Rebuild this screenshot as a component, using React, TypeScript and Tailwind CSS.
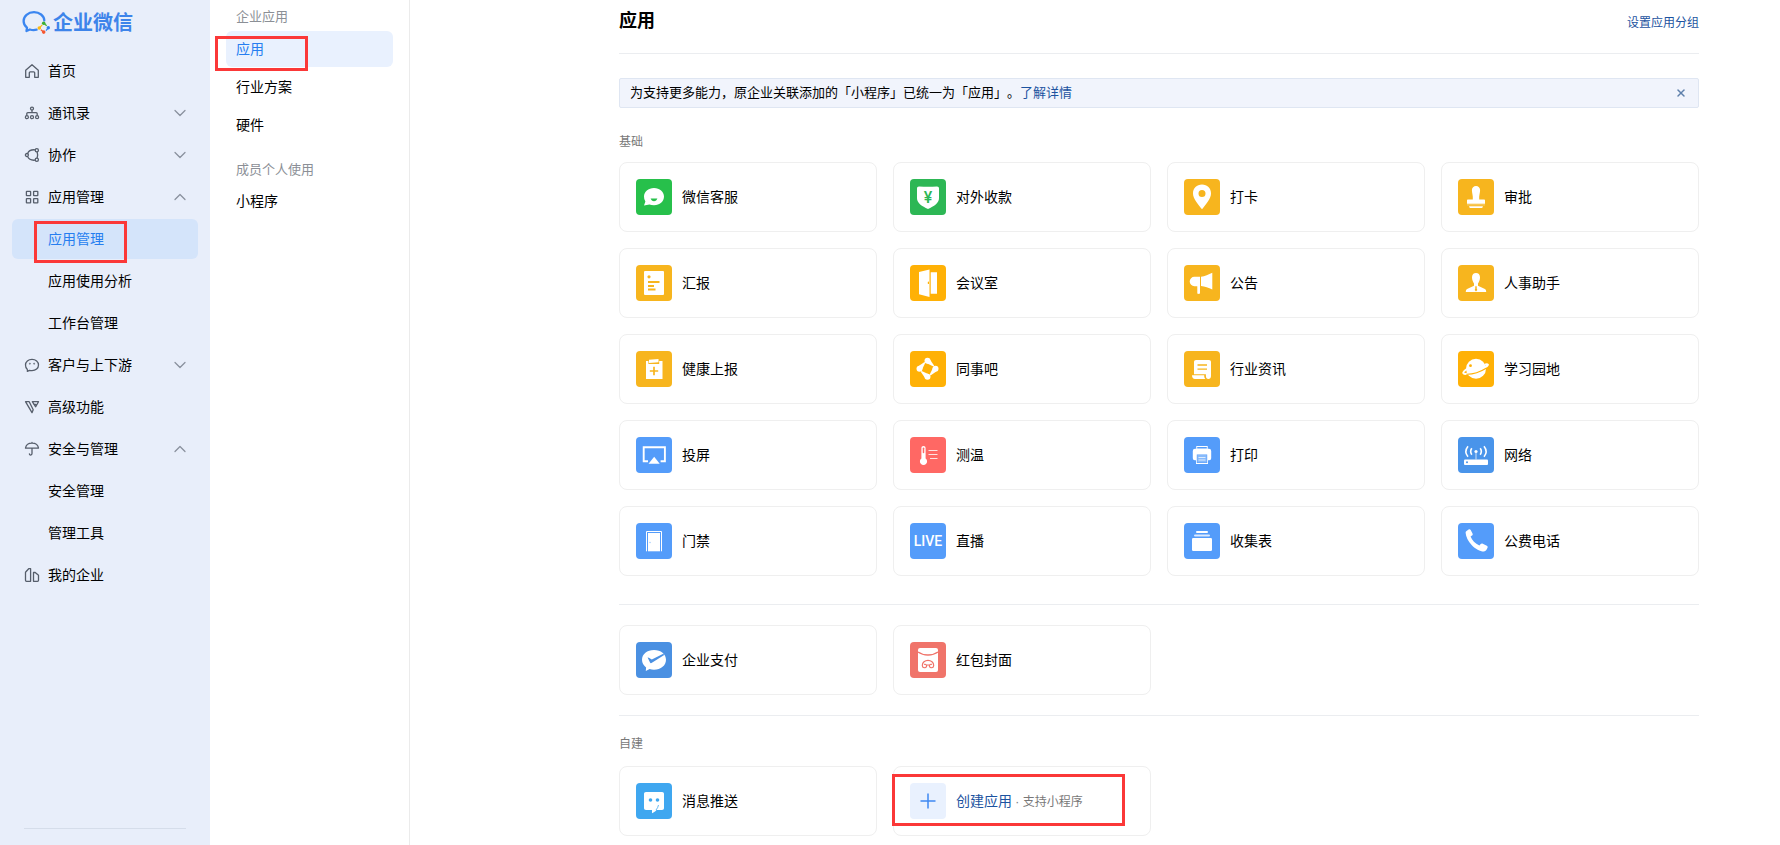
import type { ReactNode } from "react"
import { ChevronDown, ChevronUp, X } from "lucide-react"
import clsx from "clsx"

type MenuItem = {
  label: string
  icon?: ReactNode
  arrow?: "up" | "down"
  active?: boolean
}

type AppItem = {
  label: string
  bg: string
  icon: ReactNode
}

// 侧边栏图标 16x16
function LineIcon({ children }: { children: ReactNode }) {
  return (
    <svg
      viewBox="0 0 16 16"
      className="size-4 shrink-0"
      fill="none"
      stroke="#565e6b"
      strokeWidth="1.3"
      strokeLinecap="round"
      strokeLinejoin="round"
      aria-hidden="true"
    >
      {children}
    </svg>
  )
}

const menu: MenuItem[] = [
  {
    label: "首页",
    icon: (
      <LineIcon>
        <path d="M1.7 7.2 8 1.7l6.3 5.5v7.1h-3.6V9.8a1 1 0 0 0-1-1H6.3a1 1 0 0 0-1 1v4.5H1.7z" />
      </LineIcon>
    ),
  },
  {
    label: "通讯录",
    arrow: "down",
    icon: (
      <LineIcon>
        <circle cx="8" cy="3.6" r="1.5" />
        <path d="M8 5.2v2.5M2.8 10V8.700a1 1 0 0 1 1-1h8.400a1 1 0 0 1 1 1V10" />
        <circle cx="2.9" cy="12.2" r="1.5" />
        <circle cx="8" cy="12.2" r="1.5" />
        <circle cx="13.1" cy="12.2" r="1.5" />
      </LineIcon>
    ),
  },
  {
    label: "协作",
    arrow: "down",
    icon: (
      <LineIcon>
        <circle cx="2.9" cy="8" r="1.5" />
        <circle cx="12.8" cy="3.2" r="1.6" />
        <circle cx="12.8" cy="12.8" r="1.6" />
        <path d="M3.6 6.4C4.6 4 7 2.5 10.9 2.8M3.6 9.6c1 2.4 3.4 3.9 7.3 3.6M13.2 5.2c.6 1.8.6 3.8 0 5.6" />
      </LineIcon>
    ),
  },
  {
    label: "应用管理",
    arrow: "up",
    icon: (
      <LineIcon>
        <rect x="2.4" y="2.4" width="4.2" height="4.2" rx=".4" />
        <rect x="9.6" y="2.4" width="4.2" height="4.2" rx=".4" />
        <rect x="2.4" y="9.6" width="4.2" height="4.2" rx=".4" />
        <rect x="9.6" y="9.6" width="4.2" height="4.2" rx=".4" />
      </LineIcon>
    ),
  },
  { label: "应用管理", active: true },
  { label: "应用使用分析" },
  { label: "工作台管理" },
  {
    label: "客户与上下游",
    arrow: "down",
    icon: (
      <LineIcon>
        <path d="M3.3 14.3c.3-.9.3-1.4-.1-2.1C2 11.100 1.500 9.700 1.500 8c0-3.300 2.800-5.700 6.500-5.700s6.500 2.400 6.500 5.700-2.800 5.700-6.500 5.700c-1 0-1.700-.1-2.400-.3z" />
        <circle cx="5.8" cy="6.600" r=".3" />
        <circle cx="10.2" cy="6.600" r=".3" />
      </LineIcon>
    ),
  },
  {
    label: "高级功能",
    icon: (
      <LineIcon>
        <path d="M1.500 2.700h3.700l4 8L8 13.700z" />
        <path d="M8.300 2.700h6.200l-2.800 5.100zM9.900 5.400h1.800" />
      </LineIcon>
    ),
  },
  {
    label: "安全与管理",
    arrow: "up",
    icon: (
      <LineIcon>
        <path d="M1.500 7.200C1.900 4.200 4.600 2.200 8 2.200s6.100 2 6.500 5zM8 1.500v.7M8 7.200v5.400c0 1.900-2.600 1.900-2.600.2" />
      </LineIcon>
    ),
  },
  { label: "安全管理" },
  { label: "管理工具" },
  {
    label: "我的企业",
    icon: (
      <LineIcon>
        <path d="M1.500 13.300V5.200l3.200-3.500h1.900v12.600H2.500a1 1 0 0 1-1-1zM9.500 14.300V5.500h1.700l3.300 2.800v5a1 1 0 0 1-1 1z" />
      </LineIcon>
    ),
  },
]

const baseApps: AppItem[] = [
  {
    label: "微信客服",
    bg: "#27c04b",
    icon: (
      <>
        <path fill="#fff" d="M18 9c5.700 0 10 3.700 10 8.600S23.700 26.300 18 26.300c-1.800 0-3.300-.3-4.600-.8L8 26.500l1.400-4A8.300 8.300 0 0 1 8 17.600C8 12.700 12.300 9 18 9z" />
        <path fill="#27c04b" d="M14.600 19.600h6.800c-.5 1.700-1.800 2.600-3.400 2.600s-2.900-.9-3.400-2.600z" />
      </>
    ),
  },
  {
    label: "对外收款",
    bg: "#2db755",
    icon: (
      <>
        <path fill="#fff" d="M9 7.400c6 .3 12 .3 18 0 1.300 0 2 .7 2 2v9.800c0 4.800-5 8-11 10.800-6-2.800-11-6-11-10.800V9.400c0-1.300.7-2 2-2z" />
        <text x="18" y="24" textAnchor="middle" fontSize="16" fontWeight="500" fill="#2db755" fontFamily="Roboto, sans-serif">¥</text>
      </>
    ),
  },
  {
    label: "打卡",
    bg: "#f7b51e",
    icon: <path fill="#fff" fillRule="evenodd" d="M18 5.500c5.200 0 9 3.800 9 8.900 0 5.200-5.200 11-9 15.900-3.800-4.900-9-10.700-9-15.900 0-5.100 3.800-8.900 9-8.900zm0 5.500a3.500 3.500 0 1 0 0 7 3.500 3.500 0 0 0 0-7z" />,
  },
  {
    label: "审批",
    bg: "#f7b51e",
    icon: (
      <>
        <path fill="#fff" d="M18 7c2.400 0 4.100 1.700 4.100 4 0 3.200-1.300 5.600-.9 9.600H26c.6 0 1 .4 1 1v3.200H9v-3.200c0-.6.400-1 1-1h4.800c.4-4-.9-6.400-.9-9.600 0-2.300 1.700-4 4.100-4z" />
        <path fill="#fff" opacity=".5" d="M9 25.500h18v.8H9z" />
        <path fill="#fff" d="M11 27.300h14l-.8 1.700H11.800z" />
      </>
    ),
  },
  {
    label: "汇报",
    bg: "#f7b51e",
    icon: (
      <>
        <rect x="8" y="6" width="20" height="24" rx="1" fill="#fff" />
        <circle cx="13" cy="11.800" r="1.600" fill="#f7b51e" />
        <path stroke="#f7b51e" strokeWidth="1.800" d="M12 17h11.500M12 21h6M12 24.500h7.500" />
      </>
    ),
  },
  {
    label: "会议室",
    bg: "#ffb106",
    icon: (
      <>
        <path fill="#fff" d="m9 7 10.500-2.400V32L9 29.200zM20.700 7.200H27v21.600h-6.300z" />
        <rect x="17.800" y="16.500" width="1.200" height="2.600" rx=".6" fill="#ffb106" />
      </>
    ),
  },
  {
    label: "公告",
    bg: "#f7b51e",
    icon: (
      <>
        <path fill="#fff" d="M10.400 11.800H16V28c0 1.200-2.700 1.200-2.700 0v-6.800h-2.900a4.700 4.700 0 0 1 0-9.400z" />
        <path fill="#fff" d="M17 11.800c4-.4 7.500-2.200 11.300-4v16.600c-3.800-1.600-7.300-2.900-11.300-3.300z" />
      </>
    ),
  },
  {
    label: "人事助手",
    bg: "#f7b51e",
    icon: (
      <>
        <path fill="#fff" d="M18 8c2.400 0 4 1.600 4 4.200 0 2.700-1 4.600-2 6.300v2.300l6.900 3.200c.9.500 1.300 1.300 1.300 3H7.800c0-1.700.4-2.500 1.300-3l6.900-3.200v-2.300c-1-1.700-2-3.600-2-6.300C14 9.600 15.600 8 18 8z" />
        <path fill="#f7b51e" d="m18 20.800.9 1.200-.3 1 .7 2.100-1.300 1.300-1.300-1.300.7-2.100-.3-1z" />
      </>
    ),
  },
  {
    label: "健康上报",
    bg: "#f7b51e",
    icon: (
      <>
        <path fill="#fff" d="M10 10h2.400v3h10.800v-3h3.300v18H10z" />
        <path fill="#fff" d="M13 8.700 22.500 8v3.300l-9.500.6z" />
        <path stroke="#f7b51e" strokeWidth="1.700" d="M18 15.800v8.400M13.800 20h8.400" />
      </>
    ),
  },
  {
    label: "同事吧",
    bg: "#ffb106",
    icon: (
      <g fill="#fff">
        {[0, 90, 180, 270].map((deg) => (
          <g key={deg} transform={`rotate(${deg} 17.500 17.700)`}>
            <circle cx="17.500" cy="9.700" r="3" />
            <path d="M16.800 12.300 20.300 8.900l3.900 5.800-.8.800z" />
          </g>
        ))}
      </g>
    ),
  },
  {
    label: "行业资讯",
    bg: "#f7b51e",
    icon: (
      <>
        <path fill="#fff" d="M12 9h13c1.200 0 2 .8 2 2v14c0 2-1 3-2.600 3s-2.500-1.100-2.500-3v-1.700H10V11c0-1.200.8-2 2-2z" />
        <path fill="#fff" d="M8 24.300h12.200c0 1.700.3 2.800 1.200 3.700H11c-1.900 0-3-1.500-3-3.700z" />
        <path stroke="#f7b51e" strokeWidth="1.300" d="M13.500 14h9.500M13.500 18.200h9.500" />
      </>
    ),
  },
  {
    label: "学习园地",
    bg: "#ffb106",
    icon: (
      <>
        <circle cx="18" cy="17.800" r="10" fill="#fff" />
        <path fill="none" stroke="#fff" strokeWidth="2" strokeLinecap="round" d="M8.200 18.500c-2.300 1.700-3.300 3-2.800 3.700 1.300 1.800 9.800.2 17-3.300 5-2.400 8-4.400 7.400-5.300-.2-.4-1-.4-2.200-.2" />
        <path fill="none" stroke="#ffb106" strokeWidth="1.100" d="M8.300 23.300c6.500.2 14-2.400 20.300-6.300" />
        <circle cx="12.500" cy="14.700" r="1.400" fill="#ffb106" />
      </>
    ),
  },
  {
    label: "投屏",
    bg: "#549cfa",
    icon: (
      <>
        <path fill="none" stroke="#fff" strokeWidth="1.900" d="M12 24.300H7.700V10.200h21.200v14.100h-4.300" />
        <path fill="#fff" d="m18.200 19.700 5.500 7H12.500z" />
      </>
    ),
  },
  {
    label: "测温",
    bg: "#ff6864",
    icon: (
      <>
        <path fill="#fff" d="M13.500 9c1.300 0 2.100.9 2.100 2.200v10.200a3.600 3.600 0 1 1-4.200 0V11.200c0-1.300.8-2.200 2.100-2.200z" />
        <path stroke="#ff6864" strokeWidth="1.500" strokeLinecap="round" d="M13.500 11.200v4.300" />
        <path stroke="#fff" strokeWidth="1" opacity=".8" d="M18.500 13.500h9M18.500 17.500h9M20 21.500h7.500" />
      </>
    ),
  },
  {
    label: "打印",
    bg: "#549cfa",
    icon: (
      <>
        <path fill="#fff" d="M12.300 9h11.400v2.800H25a2.200 2.200 0 0 1 2.200 2.200v7.200a2 2 0 0 1-2 2H24V27H12v-3.800h-1.200a2 2 0 0 1-2-2V14a2.200 2.200 0 0 1 2.200-2.200h1.300z" />
        <path fill="#549cfa" d="M13.200 10h9.600v1.500h-9.600zM12.800 17.500h10.400v8.600H12.800z" />
        <path fill="#fff" opacity=".3" d="M13.300 18h9.400v7.500h-9.400z" />
        <path stroke="#fff" strokeWidth=".9" opacity=".8" d="M14.500 20.500h7M14.500 23h7" />
      </>
    ),
  },
  {
    label: "网络",
    bg: "#4994ea",
    icon: (
      <>
        <rect x="6" y="22.600" width="24" height="5.400" rx="1" fill="#fff" />
        <circle cx="9" cy="25.300" r="1" fill="#4994ea" />
        <circle cx="18" cy="14.500" r="1.600" fill="#fff" />
        <path stroke="#fff" opacity=".6" strokeWidth="1.200" d="M18 16v6.600" />
        <path fill="none" stroke="#fff" strokeWidth="1.600" d="M13.800 11.300c-1.400 2-1.400 4.400 0 6.400M10 9.200c-2.600 3.300-2.600 7.400 0 10.600M22.200 11.300c1.400 2 1.400 4.400 0 6.400M26 9.200c2.600 3.300 2.600 7.400 0 10.600" />
      </>
    ),
  },
  {
    label: "门禁",
    bg: "#549cfa",
    icon: (
      <>
        <path fill="none" stroke="#fff" strokeWidth="1" d="M10.500 28.300V8.500h15v19.800" />
        <path fill="#fff" d="M12 10h12v18.300H12z" />
        <circle cx="14" cy="19.500" r=".7" fill="#549cfa" opacity=".6" />
      </>
    ),
  },
  {
    label: "直播",
    bg: "#549cfa",
    icon: (
      <text x="18" y="23" textAnchor="middle" fontSize="14" fontWeight="500" fill="#fff" fontFamily="Roboto, sans-serif">LIVE</text>
    ),
  },
  {
    label: "收集表",
    bg: "#549cfa",
    icon: (
      <>
        <rect x="8" y="15" width="20" height="13" rx="1.200" fill="#fff" />
        <rect x="10" y="11.600" width="16" height="2" rx="1" fill="#fff" opacity=".8" />
        <rect x="12" y="8" width="12" height="2" rx="1" fill="#fff" />
      </>
    ),
  },
  {
    label: "公费电话",
    bg: "#549cfa",
    icon: (
      <path fill="#fff" d="M7.600 9.800c-.2-1.600 1.700-2.600 3-3.400.9-.5 1.600-.3 2.100.6l1.800 3.500c.4.900.2 1.600-.5 2.100l-1.400 1c1.500 3.800 4.500 7 8.800 8.900l1.300-1.400c.6-.6 1.300-.7 2.100-.3l4 2c.9.500 1.100 1.100.7 2-.7 1.700-1.700 3.500-3.500 3.800-3.200.3-8.600-2.600-12.400-6.600-3.500-3.700-5.700-8.300-6-12.200z" />
    ),
  },
]

const payApps: AppItem[] = [
  {
    label: "企业支付",
    bg: "#4a90e2",
    icon: (
      <>
        <path fill="#fff" d="M18 8c6.900 0 12 4.100 12 9.800s-5.100 9.900-12 9.900c-1.600 0-3.100-.2-4.400-.6L9.800 29l.3-3.600C7.500 23.600 6 20.900 6 17.800 6 12.100 11.100 8 18 8z" />
        <path fill="#4a90e2" d="M11.600 15.600c.5-.4 1-.2 1.700.3l2.500 1.700 11.500-5.800.9 1.200-12.300 7.800c-1 .6-1.500.4-2-.6z" />
      </>
    ),
  },
  {
    label: "红包封面",
    bg: "#f0746a",
    icon: (
      <>
        <rect x="8" y="6" width="20" height="24" rx="2" fill="#fff" />
        <path fill="none" stroke="#f0746a" strokeWidth="1.400" d="M8 10c5.500 4 14.500 4 20 0" />
        <path fill="none" stroke="#f0746a" strokeWidth="1.200" strokeLinecap="round" d="M14.500 22.300c1.600-.3 2.500 1 2 2.200-.8 1.900-4.200 1.700-4.200-1.100 0-3 2.600-5.100 5.700-5.100s5.700 2.100 5.700 5.100c0 2.800-3.400 3-4.200 1.100-.5-1.200.4-2.500 2-2.200M16.500 23h3" />
      </>
    ),
  },
]

const pushApp: AppItem = {
  label: "消息推送",
  bg: "#3fa7f0",
  icon: (
    <>
      <path fill="#fff" d="M10 9h16c1.300 0 2 .7 2 2v14c0 1.300-.7 2-2 2h-5.500c-1 1.300-2.500 2.500-4.500 3.200V27h-6c-1.300 0-2-.7-2-2V11c0-1.300.7-2 2-2z" />
      <circle cx="14.500" cy="17" r="1.800" fill="#3fa7f0" />
      <circle cx="21.500" cy="17" r="1.800" fill="#3fa7f0" />
      <path fill="none" stroke="#3fa7f0" strokeWidth=".8" d="M22.500 22c-.4 2-1.200 3.500-2.500 5" />
    </>
  ),
}

function Logo() {
  return (
    <svg viewBox="0 0 29 25" className="w-[29px] h-[25px]" aria-hidden="true">
      <path
        fill="none"
        stroke="#3b86f0"
        strokeWidth="2.300"
        strokeLinecap="round"
        strokeLinejoin="round"
        d="M22.300 11.400C22 6.600 17.500 3.200 12 3.200 6 3.200 1.600 7.100 1.600 12c0 2.700 1.300 5.100 3.400 6.700l-.5 3.300 3.400-1.500c2 .6 4.600.7 6.700.2"
      />
      <path fill="none" stroke="#3cb034" strokeWidth="1.200" d="m21.700 14.300 3 2.500" />
      <path fill="none" stroke="#2d7ff0" strokeWidth="1.200" d="m26.500 18.700-2.500 3" />
      <path fill="none" stroke="#f5562f" strokeWidth="1.200" d="m21.500 23-2.600-2.300" />
      <path fill="none" stroke="#fcb813" strokeWidth="1.200" d="m17.500 18.800 2.700-3" />
      <circle cx="21.700" cy="14.200" r="1.800" fill="#3cb034" />
      <circle cx="26.300" cy="18.800" r="1.700" fill="#2d7ff0" />
      <circle cx="21.700" cy="23.100" r="1.800" fill="#f5562f" />
      <circle cx="17.300" cy="19" r="1.800" fill="#fcb813" />
    </svg>
  )
}

function AppIcon({ bg, children }: { bg: string; children: ReactNode }) {
  return (
    <svg viewBox="0 0 36 36" className="size-9 shrink-0" fill="none" aria-hidden="true">
      <rect width="36" height="36" rx="4" fill={bg} />
      {children}
    </svg>
  )
}

function AppCard({ app }: { app: AppItem }) {
  return (
    <a href="#" className="flex items-center gap-2.5 h-[70px] px-4 border border-[#efefef] rounded-lg bg-white">
      <AppIcon bg={app.bg}>{app.icon}</AppIcon>
      <span className="pb-0.5">{app.label}</span>
    </a>
  )
}

function Sidebar() {
  return (
    <aside className="w-[210px] shrink-0 flex flex-col px-3 bg-[#e8eefa]">
      <a href="#" className="flex items-center gap-0.5 h-[51px] pb-2 pl-2.5 text-xl font-bold text-[#3d84ea]">
        <Logo />
        企业微信
      </a>
      <nav className="flex flex-col gap-0.5">
        {menu.map((item, i) => (
          <a
            key={i}
            href="#"
            className={clsx(
              "relative flex items-center gap-2 h-10 px-3 rounded-md",
              item.active && "bg-[#d4e4fa] text-[#267ef0]"
            )}
          >
            {item.icon ?? <span className="w-4" />}
            <span className="pb-0.5">{item.label}</span>
            {item.arrow === "down" && <ChevronDown className="ml-auto -mr-1 size-5 text-[#8a919d]" strokeWidth={1.5} />}
            {item.arrow === "up" && <ChevronUp className="ml-auto -mr-1 size-5 text-[#8a919d]" strokeWidth={1.5} />}
            {item.active && <span className="absolute left-[22px] top-0.5 w-[93px] h-[42px] border-3 border-[#fb3838]" />}
          </a>
        ))}
      </nav>
      <div className="mt-auto mx-3 mb-4 border-t border-[#d5ddea]" />
    </aside>
  )
}

function SubMenu() {
  return (
    <nav className="w-[200px] shrink-0 px-4 border-r border-[#ebebeb]">
      <h2 className="py-1.5 pl-2.5 text-[13px] leading-[19px] text-[#8b8f96]">企业应用</h2>
      <div className="flex flex-col gap-0.5">
        <a href="#" className="relative flex items-center h-9 pl-2.5 pb-0.5 rounded-md bg-[#e9f1fe] text-[#267ef0]">
          应用
          <span className="absolute -left-[11px] top-[5px] w-[93px] h-[35px] border-3 border-[#fb3838]" />
        </a>
        <a href="#" className="flex items-center h-9 pl-2.5 pb-0.5">行业方案</a>
        <a href="#" className="flex items-center h-9 pl-2.5 pb-0.5">硬件</a>
      </div>
      <h2 className="pt-4 pb-1 pl-2.5 text-[13px] leading-5 text-[#8b8f96]">成员个人使用</h2>
      <a href="#" className="flex items-center h-9 pl-2.5 pb-0.5">小程序</a>
    </nav>
  )
}

export default function App() {
  return (
    <div className="flex min-h-screen bg-white text-sm text-black font-['Noto_Sans_CJK_SC',sans-serif]">
      <Sidebar />
      <SubMenu />

      <main className="flex-1 pl-[209px] pr-[81px] pb-2">
        <header className="flex items-baseline justify-between h-[54px] pt-[5px] border-b border-[#ebedf0]">
          <h1 className="text-lg font-bold">应用</h1>
          <a href="#" className="text-xs text-[#1c53a0]">设置应用分组</a>
        </header>

        {/* 提示条 */}
        <div className="flex items-center justify-between h-[30px] mt-6 pl-2.5 pr-[11px] border border-[#dfe6f2] rounded-xs bg-[#f1f4fc] text-[13px]">
          <p className="pb-0.5 [text-spacing-trim:space-all]">
            为支持更多能力，原企业关联添加的「小程序」已统一为「应用」。
            <a href="#" className="text-[#1c53a0]">了解详情</a>
          </p>
          <button type="button" aria-label="关闭" className="text-[#5f80ab]">
            <X className="size-3" strokeWidth={3} />
          </button>
        </div>

        {/* 基础应用 */}
        <section className="pb-7 border-b border-[#ebedf0]">
          <h2 className="pt-6 pb-3 text-xs leading-[18px] text-[#787878]">基础</h2>
          <div className="grid grid-cols-4 gap-4">
            {baseApps.map((app) => (
              <AppCard key={app.label} app={app} />
            ))}
          </div>
        </section>

        <section className="grid grid-cols-4 gap-4 py-5 border-b border-[#ebedf0]">
          {payApps.map((app) => (
            <AppCard key={app.label} app={app} />
          ))}
        </section>

        {/* 自建应用 */}
        <section>
          <h2 className="pt-4.5 pb-3.5 text-xs leading-[18px] text-[#787878]">自建</h2>
          <div className="grid grid-cols-4 gap-4">
            <AppCard app={pushApp} />
            <a href="#" className="relative flex items-center gap-2.5 h-[70px] px-4 border border-[#efefef] rounded-lg">
              <AppIcon bg="#e9f1fe">
                <path stroke="#3e88f2" strokeWidth="1.500" d="M18 10.500v15M10.500 18h15" />
              </AppIcon>
              <span className="pb-0.5 text-[#1c53a0]">
                创建应用
                <span className="text-xs text-[#787878]">
                  <span className="font-['Liberation_Sans',sans-serif]"> · </span>
                  支持小程序
                </span>
              </span>
              <span className="absolute -left-0.5 top-[7px] w-[233px] h-[52px] border-3 border-[#fb3838]" />
            </a>
          </div>
        </section>
      </main>
    </div>
  )
}
